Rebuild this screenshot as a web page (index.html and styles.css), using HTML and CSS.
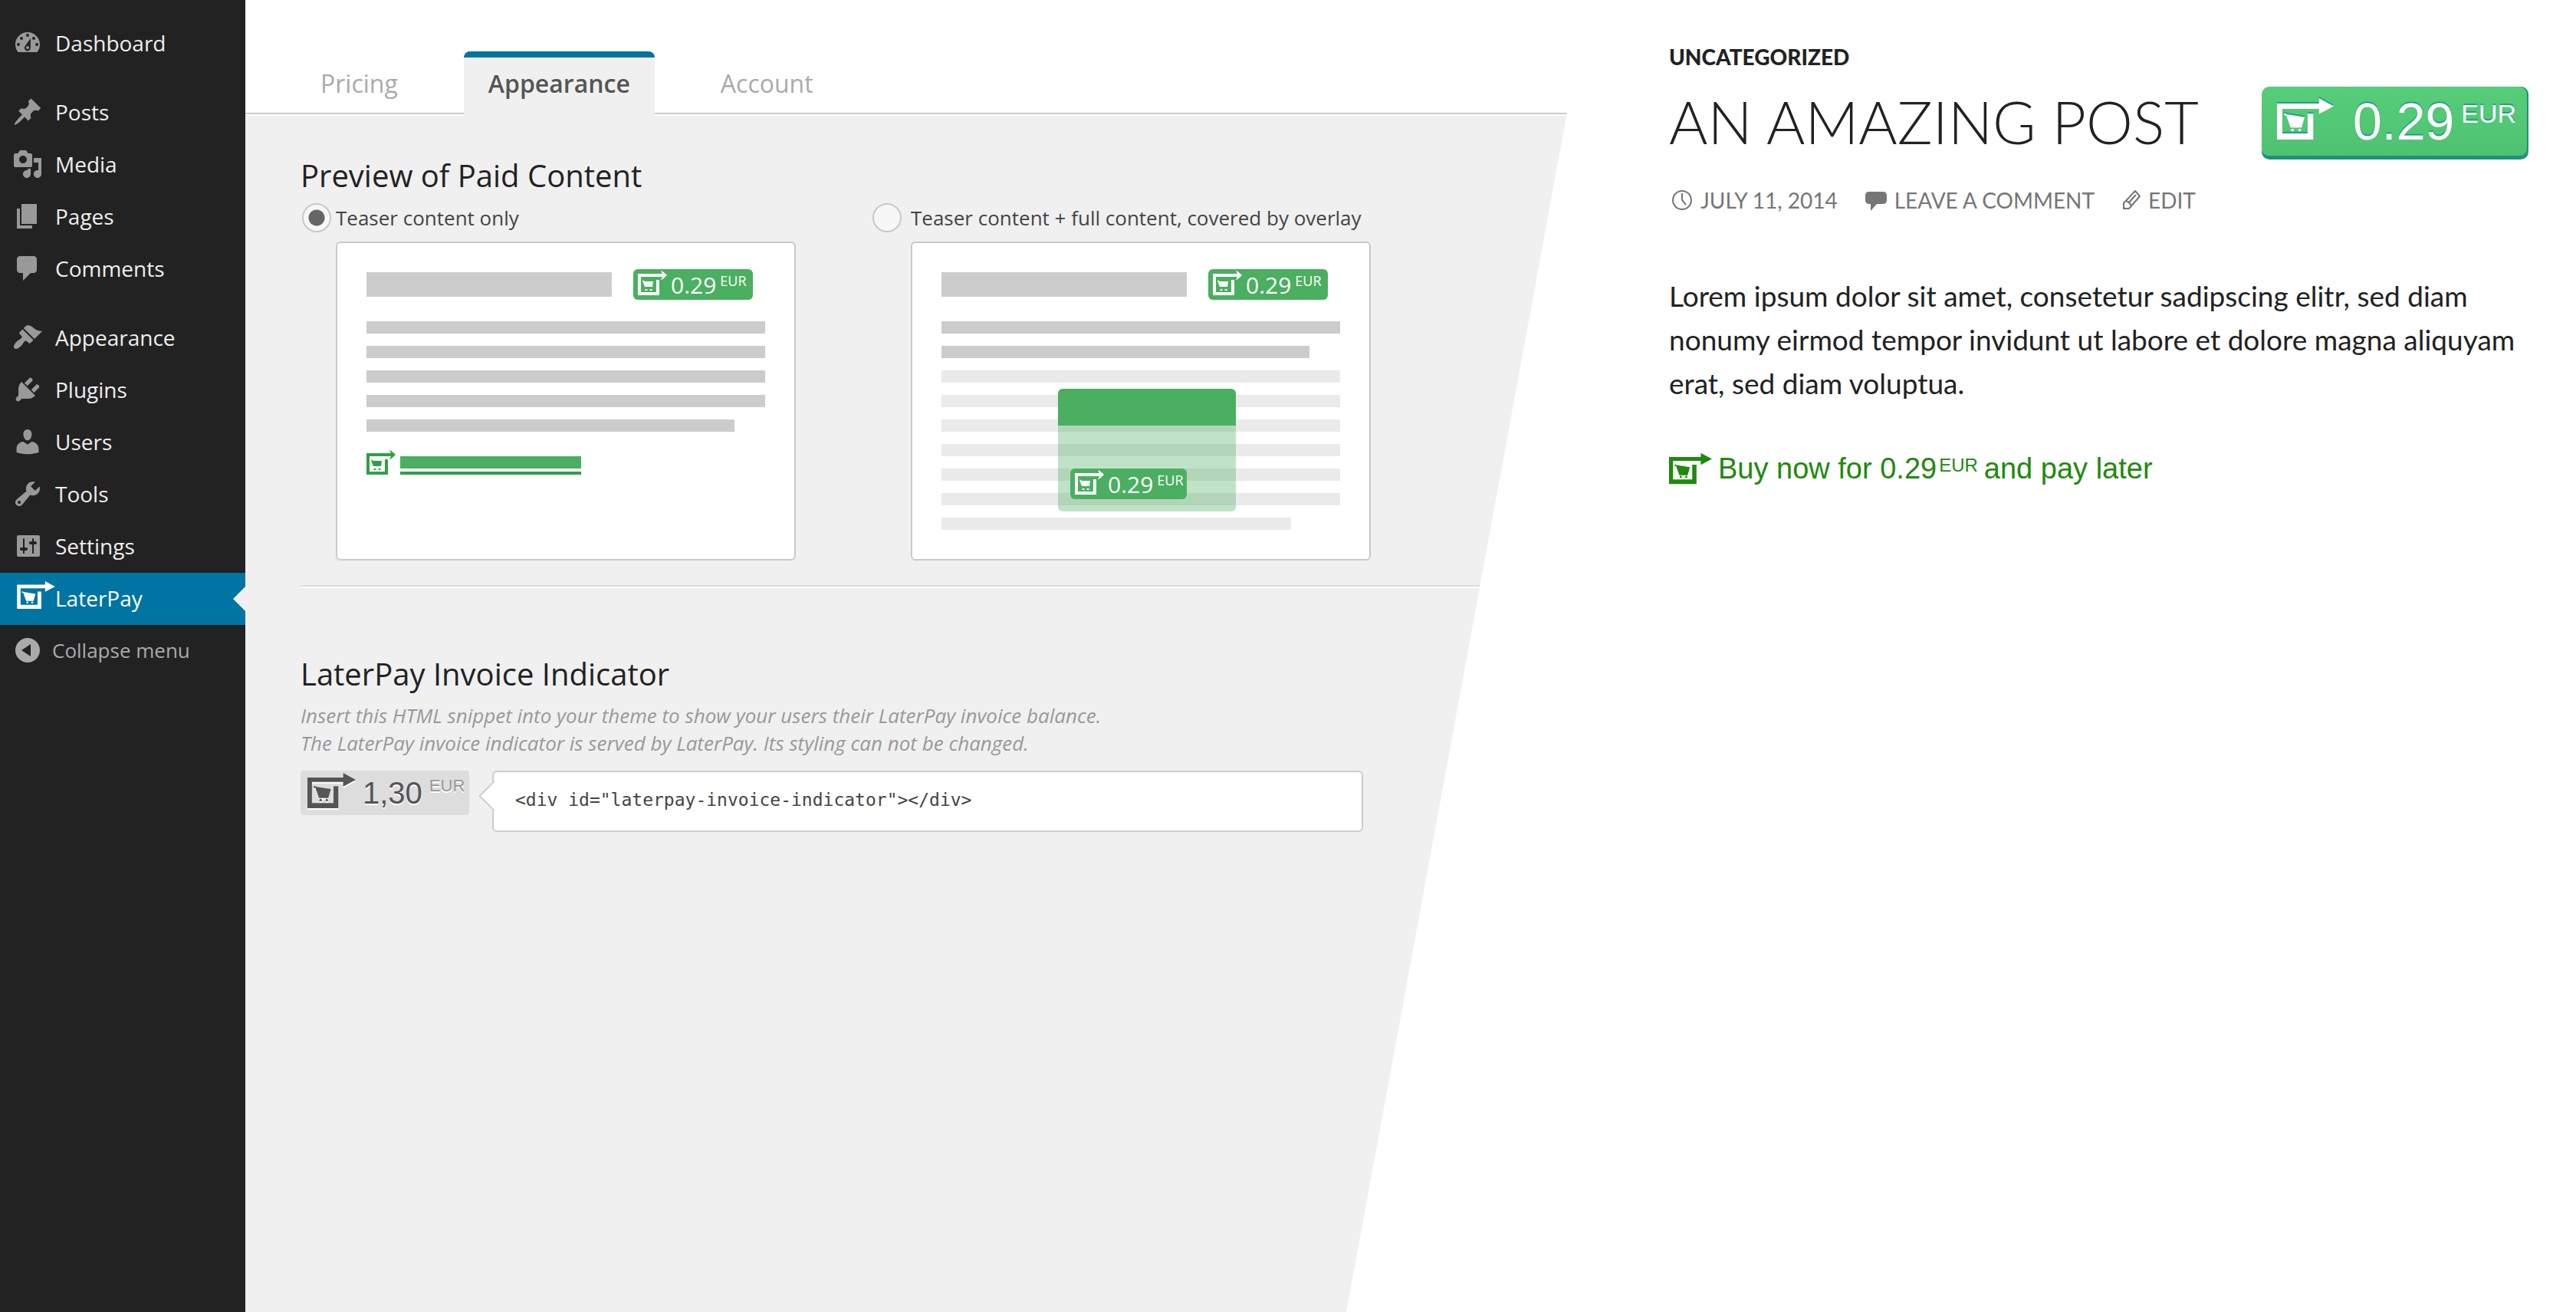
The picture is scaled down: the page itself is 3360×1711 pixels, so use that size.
FILE: index.html
```html
<!DOCTYPE html>
<html lang="en">
<head>
<meta charset="utf-8">
<title>LaterPay – Appearance</title>
<link rel="stylesheet" href="styles.css">
</head>
<body>
<svg class="sprite" aria-hidden="true">
  <symbol id="logo" viewBox="0 0 150 109">
    <path d="M0 14h111V0l39 21-39 21V28H14v65h67V41h15v68H0z"/>
    <circle cx="22" cy="43" r="3"/>
    <path d="M22 42l51 8-8 28H36L25 47z"/>
    <circle cx="41" cy="84" r="4"/><circle cx="60" cy="84" r="4"/>
  </symbol>
  <symbol id="logo-small" viewBox="0 0 19 16">
    <path d="M0 2h16l-1-2q1 0 4 3-3 3-4 3l1-2H2v10h10V6h2v10H0z"/>
    <path d="M3 6l1.500 1H10l-.5 3.500h-5L3.500 8zM4.800 12h1.400v1H4.800zM7.800 12h1.400v1H7.800z"/>
  </symbol>
</svg>
<div class="layout">
  <nav class="menu" aria-label="Admin menu">
    <ul class="menu-group">
      <li><a class="menu-item" href="#"><svg class="menu-icon" viewBox="0 0 20 20"><path fill-rule="evenodd" d="M3.760 16h12.480C17.340 14.630 18 12.890 18 11c0-4.420-3.580-8-8-8s-8 3.580-8 8c0 1.890.66 3.630 1.760 5zM10 4a1 1 0 1 1 0 2 1 1 0 0 1 0-2zM6 6a1 1 0 1 1 0 2 1 1 0 0 1 0-2zM14 6a1 1 0 1 1 0 2 1 1 0 0 1 0-2zM4 10a1 1 0 1 1 0 2 1 1 0 0 1 0-2zM16 10a1 1 0 1 1 0 2 1 1 0 0 1 0-2zM12 7l-.1 6a2 2 0 1 1-3.500-1.100zM10 12a1 1 0 1 0 0 2 1 1 0 0 0 0-2z"/></svg>Dashboard</a></li>
    </ul>
    <ul class="menu-group">
      <li><a class="menu-item" href="#"><svg class="menu-icon" viewBox="0 0 20 20"><path d="M10.440 3.020l1.820-1.820 6.360 6.350-1.830 1.820c-1.050-.68-2.480-.57-3.410.36l-.75.75c-.92.93-1.040 2.350-.35 3.410l-1.830 1.820-2.410-2.410-2.800 2.790c-.42.42-3.380 2.710-3.800 2.290s1.860-3.390 2.280-3.810l2.790-2.790L4.100 9.360l1.830-1.820c1.050.69 2.480.57 3.400-.36l.75-.75c.93-.92 1.050-2.350.36-3.410z"/></svg>Posts</a></li>
      <li><a class="menu-item" href="#"><svg class="menu-icon" viewBox="0 0 20 20"><path d="M13 11V4c0-.55-.45-1-1-1h-1.670L9 1H5L3.670 3H2c-.55 0-1 .45-1 1v7c0 .55.45 1 1 1h10c.55 0 1-.45 1-1zM7 4.500c1.380 0 2.500 1.120 2.500 2.500S8.380 9.500 7 9.500 4.500 8.380 4.500 7 5.620 4.500 7 4.500zM14 6h5v10.500c0 1.380-1.120 2.500-2.500 2.500S14 17.880 14 16.500s1.120-2.500 2.500-2.500c.17 0 .34.02.5.05V9h-3V6zm-4 8.050V13h2v3.500c0 1.380-1.120 2.500-2.500 2.500S7 17.880 7 16.500 8.120 14 9.500 14c.17 0 .34.02.5.05z"/></svg>Media</a></li>
      <li><a class="menu-item" href="#"><svg class="menu-icon" viewBox="0 0 20 20"><path d="M6 15V2h10v13H6zm-1 1h8v2H3V5h2v11z"/></svg>Pages</a></li>
      <li><a class="menu-item" href="#"><svg class="menu-icon" viewBox="0 0 20 20"><path d="M5 2h9c1.100 0 2 .9 2 2v7c0 1.100-.9 2-2 2h-2l-5 5v-5H5c-1.100 0-2-.9-2-2V4c0-1.100.9-2 2-2z"/></svg>Comments</a></li>
    </ul>
    <ul class="menu-group">
      <li><a class="menu-item" href="#"><svg class="menu-icon" viewBox="0 0 20 20"><path d="M14.480 11.060L7.410 3.990l1.500-1.500c.5-.56 2.300-.47 3.510.32 1.210.8 1.430 1.280 2.910 2.100 1.180.64 2.450 1.260 4.450.85zm-.71.71L6.700 4.700 4.930 6.470c-.39.39-.39 1.020 0 1.410l1.060 1.060c.39.39.39 1.030 0 1.420-.6.6-1.430 1.110-2.210 1.690-.35.26-.7.53-1.010.84C1.430 14.230.4 16.080 1.400 17.070c.99 1 2.840-.03 4.180-1.360.31-.31.58-.66.85-1.020.57-.78 1.080-1.610 1.690-2.210.39-.39 1.020-.39 1.410 0l1.060 1.060c.39.39 1.020.39 1.410 0z"/></svg>Appearance</a></li>
      <li><a class="menu-item" href="#"><svg class="menu-icon" viewBox="0 0 20 20"><path d="M13.110 4.360L9.870 7.600 8 5.730l3.240-3.240c.35-.34 1.050-.2 1.560.32.52.51.66 1.210.31 1.550zm-8 1.770l.91-1.120 9.010 9.010-1.190.84c-.71.71-2.630 1.160-3.820 1.160H6.140L4.900 17.260c-.59.59-1.540.59-2.120 0-.59-.58-.59-1.530 0-2.120l1.240-1.240v-3.880c0-1.130.4-3.190 1.090-3.890zm7.260 3.970l3.240-3.240c.34-.35 1.040-.21 1.550.31.52.51.66 1.210.31 1.550l-3.240 3.250z"/></svg>Plugins</a></li>
      <li><a class="menu-item" href="#"><svg class="menu-icon" viewBox="0 0 20 20"><path d="M10 9.250c-2.270 0-2.730-3.440-2.730-3.440C7 4.020 7.820 2 9.970 2c2.160 0 2.980 2.020 2.710 3.810 0 0-.41 3.440-2.680 3.440zm0 2.570L12.720 10c2.390 0 4.520 2.330 4.520 4.530v2.490s-3.650 1.130-7.240 1.130c-3.650 0-7.240-1.130-7.240-1.130v-2.490c0-2.250 1.940-4.480 4.470-4.480z"/></svg>Users</a></li>
      <li><a class="menu-item" href="#"><svg class="menu-icon" viewBox="0 0 20 20"><path d="M16.680 9.770c-1.340 1.340-3.300 1.670-4.950.99l-5.410 6.520c-.99.99-2.590.99-3.580 0s-.99-2.590 0-3.570l6.520-5.420c-.68-1.650-.35-3.610.99-4.950 1.280-1.280 3.120-1.620 4.720-1.060l-2.890 2.890 2.820 2.820 2.860-2.870c.53 1.580.18 3.390-1.080 4.650zM3.810 16.210c.4.39 1.040.39 1.430 0 .4-.4.4-1.040 0-1.430-.39-.4-1.030-.4-1.430 0-.39.39-.39 1.030 0 1.430z"/></svg>Tools</a></li>
      <li><a class="menu-item" href="#"><svg class="menu-icon" viewBox="0 0 20 20"><path d="M18 16V4c0-.55-.45-1-1-1H4c-.55 0-1 .45-1 1v12c0 .55.45 1 1 1h13c.55 0 1-.45 1-1zM8 11h1c.55 0 1 .45 1 1s-.45 1-1 1H8v1.500c0 .28-.22.5-.5.5s-.5-.22-.5-.5V13H6c-.55 0-1-.45-1-1s.45-1 1-1h1V5.500c0-.28.22-.5.5-.5s.5.22.5.5V11zm5-2h-1c-.55 0-1-.45-1-1s.45-1 1-1h1V5.500c0-.28.22-.5.5-.5s.5.22.5.5V7h1c.55 0 1 .45 1 1s-.45 1-1 1h-1v5.500c0 .28-.22.5-.5.5s-.5-.22-.5-.5V9z"/></svg>Settings</a></li>
      <li><a class="menu-item menu-item-current" href="#" aria-current="page"><svg class="menu-logo"><use href="#logo"/></svg>LaterPay</a></li>
      <li><button class="menu-item menu-collapse" type="button"><svg class="menu-icon" viewBox="0 0 20 20"><path fill-rule="evenodd" d="M10 2a8 8 0 1 1 0 16 8 8 0 0 1 0-16zM6 10l6 4V6z"/></svg>Collapse menu</button></li>
    </ul>
  </nav>

  <main class="settings">
    <nav class="tabs" aria-label="Settings">
      <a class="tab" href="#">Pricing</a>
      <a class="tab tab-current" href="#" aria-current="page">Appearance</a>
      <a class="tab" href="#">Account</a>
    </nav>
    <div class="panel">
      <section>
        <h2 class="heading" id="preview-heading">Preview of Paid Content</h2>
        <div class="options" role="radiogroup" aria-labelledby="preview-heading">
          <div class="option">
            <input class="radio" type="radio" name="preview" id="teaser" checked>
            <label class="option-label" for="teaser">Teaser content only</label>
            <div class="mock">
              <div class="mock-head">
                <div class="mock-title"></div>
                <div class="price-tag"><svg class="tag-logo"><use href="#logo-small"/></svg><span>0.29</span><sup class="tag-currency">EUR</sup></div>
              </div>
              <div class="mock-lines">
                <i class="line"></i><i class="line"></i><i class="line"></i><i class="line"></i><i class="line line-short"></i>
              </div>
              <div class="mock-link"><svg class="tag-logo"><use href="#logo-small"/></svg><i class="mock-link-text"></i></div>
            </div>
          </div>
          <div class="option option-overlay">
            <input class="radio" type="radio" name="preview" id="overlay">
            <label class="option-label" for="overlay">Teaser content + full content, covered by overlay</label>
            <div class="mock">
              <div class="mock-head">
                <div class="mock-title"></div>
                <div class="price-tag"><svg class="tag-logo"><use href="#logo-small"/></svg><span>0.29</span><sup class="tag-currency">EUR</sup></div>
              </div>
              <div class="mock-lines">
                <i class="line"></i><i class="line line-short"></i>
                <i class="line line-light"></i><i class="line line-light"></i><i class="line line-light"></i><i class="line line-light"></i><i class="line line-light"></i><i class="line line-light"></i><i class="line line-light line-shorter"></i>
              </div>
              <div class="mock-overlay">
                <div class="price-tag"><svg class="tag-logo"><use href="#logo-small"/></svg><span>0.29</span><sup class="tag-currency">EUR</sup></div>
              </div>
            </div>
          </div>
        </div>
      </section>
      <hr class="divider">
      <section>
        <h2 class="heading">LaterPay Invoice Indicator</h2>
        <p class="hint">Insert this HTML snippet into your theme to show your users their LaterPay invoice balance.<br>The LaterPay invoice indicator is served by LaterPay. Its styling can not be changed.</p>
        <div class="invoice">
          <div class="indicator"><svg class="indicator-logo"><use href="#logo"/></svg><span>1,30</span><sup class="indicator-currency">EUR</sup></div>
          <code class="snippet">&lt;div id="laterpay-invoice-indicator"&gt;&lt;/div&gt;</code>
        </div>
      </section>
    </div>
  </main>

  <article class="post">
    <a class="category" href="#">UNCATEGORIZED</a>
    <header class="post-head">
      <h1 class="post-title">AN AMAZING POST</h1>
      <button class="buy-button" type="button"><svg class="buy-button-logo"><use href="#logo"/></svg><span>0.29</span><sup class="buy-button-currency">EUR</sup></button>
    </header>
    <div class="meta">
      <a class="meta-item" href="#"><svg class="meta-icon" viewBox="0 0 28 28"><g fill="none" stroke="currentColor" stroke-width="2"><circle cx="14" cy="14" r="12"/><path d="M14 5v9l5 6"/></g></svg>JULY 11, 2014</a>
      <a class="meta-item" href="#"><svg class="meta-icon" viewBox="0 0 28 28"><path d="M5 3h18q5 0 5 5v6q0 5-5 5h-8l-8 9v-9H5q-5 0-5-5V8q0-5 5-5z"/></svg>LEAVE A COMMENT</a>
      <a class="meta-item" href="#"><svg class="meta-icon meta-icon-edit" viewBox="0 0 24 28"><path fill="none" stroke="currentColor" stroke-width="2" stroke-linejoin="round" d="M17 2l6 7L9 25H2v-7zM5 15q5 1 7 7M8 18L18 7"/><path d="M1 21l5 5H1z"/></svg>EDIT</a>
    </div>
    <p class="post-text">Lorem ipsum dolor sit amet, consetetur sadipscing elitr, sed diam nonumy eirmod tempor invidunt ut labore et dolore magna aliquyam erat, sed diam voluptua.</p>
    <a class="buy-link" href="#"><svg class="buy-link-logo"><use href="#logo"/></svg><span>Buy now for 0.29</span><sup class="buy-link-currency">EUR</sup><span>and pay later</span></a>
  </article>
</div>
</body>
</html>
```

FILE: styles.css
```css
* { box-sizing: border-box; }

body {
  margin: 0;
  background: #fff;
  color: #444;
  font-family: "Open Sans", "Noto Sans", sans-serif;
}

a { color: inherit; text-decoration: none; }
svg { flex: none; fill: currentColor; }
sup { vertical-align: baseline; }
.sprite { display: none; }

.layout {
  display: grid;
  grid-template-columns: 320px minmax(0, 1724fr) minmax(0, 1316fr);
  min-height: 100vh;
}

/* Admin menu */
.menu {
  display: flex;
  flex-direction: column;
  gap: 22px;
  padding-top: 23px;
  background: #222;
}

.menu-group { margin: 0; padding: 0; list-style: none; }

.menu-item {
  position: relative;
  display: flex;
  align-items: center;
  gap: 16px;
  width: 100%;
  height: 68px;
  padding: 0 0 2px 16px;
  color: #eee;
  font-size: 28px;
  font-weight: 500;
}

.menu-icon { width: 40px; height: 40px; color: #999; }

.menu-item-current { gap: 0; padding-left: 22px; background: #0074a2; color: #fff; }
.menu-item-current::after {
  content: "";
  position: absolute;
  right: 0;
  top: 18px;
  border: 16px solid transparent;
  border-right-color: #f0f0f0;
  border-left-width: 0;
}
.menu-logo { width: 50px; height: 36px; margin-bottom: 8px; }

.menu-collapse {
  gap: 12px;
  border: 0;
  background: none;
  color: #aaa;
  font-family: inherit;
  font-size: 26px;
  font-weight: 400;
}
.menu-collapse .menu-icon { color: #aaa; }

/* Settings */
.settings { display: flex; flex-direction: column; }

.tabs {
  position: relative;
  z-index: 1;
  display: flex;
  gap: 54px;
  padding: 67px 66px 0;
  margin-bottom: -4px;
}

.tab {
  padding: 13px 32px 21px;
  border-top: 8px solid transparent;
  color: #aaa;
  font-size: 32px;
  line-height: 42px;
}

.tab-current {
  border-top-color: #0074a2;
  border-radius: 8px 8px 0 0;
  background: #f0f0f0;
  color: #555;
  font-weight: 600;
}

.panel {
  flex: 1;
  padding: 56px 0 60px 72px;
  border-top: 2px solid #ccc;
  background: #f0f0f0;
  box-shadow: inset 0 2px #fff;
  clip-path: polygon(0 0, 100% 0, 83.3% 100%, 0 100%);
}

.heading {
  margin: 0;
  color: #222;
  font-size: 40px;
  font-weight: 400;
  line-height: 48px;
}

.options { display: grid; grid-template-columns: 746px 652px; margin-top: 12px; }

.option {
  display: grid;
  grid-template-columns: 46px 600px;
  row-gap: 12px;
  align-items: center;
  align-content: start;
}
.option-overlay { grid-template-columns: 50px 600px; }

.radio {
  appearance: none;
  width: 38px;
  height: 38px;
  margin: 0 0 0 2px;
  border: 2px solid #c8c8c8;
  border-radius: 50%;
  background: #f7f7f7;
}
.option-overlay .radio { margin-left: 0; }
.radio:checked { background: radial-gradient(circle, #666 10px, #f7f7f7 11px); }

.option-label { font-size: 26px; line-height: 38px; }

.mock {
  position: relative;
  grid-column: 2;
  height: 416px;
  padding: 34px 38px;
  border: 2px solid #c8c9c9;
  border-radius: 6px;
  background: #fff;
}

.mock-head { display: flex; align-items: center; gap: 28px; }
.mock-title { width: 320px; height: 32px; background: #ccc; }

.price-tag {
  display: flex;
  align-items: center;
  gap: 5px;
  height: 40px;
  width: 156px;
  padding-left: 6px;
  border-radius: 6px;
  background: #4aaf60;
  color: #fff;
  font-size: 30px;
}
.tag-logo { width: 38px; height: 32px; margin-bottom: 4px; }
.tag-currency { align-self: flex-start; font-size: 18px; line-height: 30px; }

.mock-lines { display: flex; flex-direction: column; gap: 16px; margin-top: 28px; }
.line { height: 16px; background: #ccc; }
.line-light { background: #eaeaea; }
.line-short { width: 480px; }
.line-shorter { width: 456px; }

.mock-link { display: flex; align-items: flex-end; gap: 6px; margin-top: 24px; color: #2ea147; }
.mock-link .tag-logo { margin: 0; }
.mock-link-text {
  width: 236px;
  height: 24px;
  border-bottom: 4px solid #2ea147;
  background: linear-gradient(#4aaf60 16px, #fff 16px);
}

.mock-overlay {
  position: absolute;
  left: 190px;
  top: 190px;
  width: 232px;
  height: 160px;
  padding: 56px 16px 0;
  border-top: 48px solid #4aaf60;
  border-radius: 6px;
  background: rgba(74, 175, 96, .35);
  background-clip: padding-box;
}
.mock-overlay .price-tag { width: 152px; }

.divider {
  height: 4px;
  margin: 32px 0 88px;
  border: 0;
  border-top: 2px solid #dcdcdc;
  background: #fff;
}

.hint {
  margin: 12px 0 18px;
  color: #999;
  font-size: 26px;
  font-style: italic;
  line-height: 36px;
}

.invoice { display: flex; align-items: flex-start; gap: 30px; }

.indicator {
  display: flex;
  align-items: center;
  gap: 9px;
  width: 220px;
  height: 58px;
  padding-left: 9px;
  border-radius: 4px;
  background: #ddd;
  color: #555;
  font-family: "Liberation Sans", Arial, sans-serif;
  font-size: 40px;
  text-shadow: 0 2px #fff;
}
.indicator-logo { width: 63px; height: 46px; margin-bottom: 6px; filter: drop-shadow(0 2px #fff); }
.indicator-currency { align-self: flex-start; color: #999; font-size: 22px; line-height: 40px; }

.snippet {
  position: relative;
  width: 1136px;
  padding: 0 28px 4px;
  border: 2px solid #ccc;
  border-radius: 6px;
  background: #fff;
  font-family: "DejaVu Sans Mono", "Liberation Mono", monospace;
  font-size: 23px;
  line-height: 72px;
}
.snippet::before {
  content: "";
  position: absolute;
  left: -14px;
  top: 17px;
  width: 26px;
  height: 26px;
  border: 2px solid #ccc;
  border-width: 0 0 2px 2px;
  background: #fff;
  transform: rotate(45deg);
}

/* Post */
.post {
  padding: 54px 62px 0 133px;
  color: #222;
  font-family: Lato, "Open Sans", sans-serif;
}

.category { display: block; font-size: 28px; font-weight: 900; line-height: 40px; }

.post-head {
  display: flex;
  justify-content: space-between;
  align-items: flex-start;
  margin-top: 19px;
}

.post-title { margin: 0; font-size: 77px; font-weight: 300; line-height: 90px; white-space: nowrap; }

.buy-button {
  display: flex;
  align-items: center;
  width: 348px;
  height: 90px;
  margin-bottom: 5px;
  padding: 0 0 0 20px;
  border: 0;
  border-radius: 10px;
  background: linear-gradient(#56cd79, #4fc271);
  box-shadow: inset -2px 0 #1c937b, 0 5px #1c937b;
  color: #fff;
  font-family: "Liberation Sans", Arial, sans-serif;
  font-size: 68px;
  text-shadow: 0 -2px #1f9f80;
}
.buy-button-logo { width: 74px; height: 54px; margin: 0 25px 6px 0; filter: drop-shadow(0 -2px #1f9f80); }
.buy-button-currency { align-self: flex-start; margin-left: 9px; font-size: 34px; line-height: 70px; }

.meta { display: flex; gap: 36px; margin-top: 33px; color: #767676; font-size: 28px; line-height: 40px; }
.meta-item { display: flex; align-items: center; gap: 10px; }
.meta-icon { width: 28px; height: 28px; }
.meta-icon-edit { width: 24px; }
.meta-item:first-child { padding-left: 3px; }

.post-text { margin: 76px 0 59px; font-size: 37px; line-height: 57px; }

.buy-link {
  display: flex;
  align-items: center;
  width: max-content;
  color: #208a0c;
  font-family: "Liberation Sans", Arial, sans-serif;
  font-size: 38px;
  line-height: 48px;
}
.buy-link-logo { width: 56px; height: 42px; margin-right: 8px; }
.buy-link-currency { align-self: flex-start; margin: 0 8px 0 3px; font-size: 24px; line-height: 40px; }
```
